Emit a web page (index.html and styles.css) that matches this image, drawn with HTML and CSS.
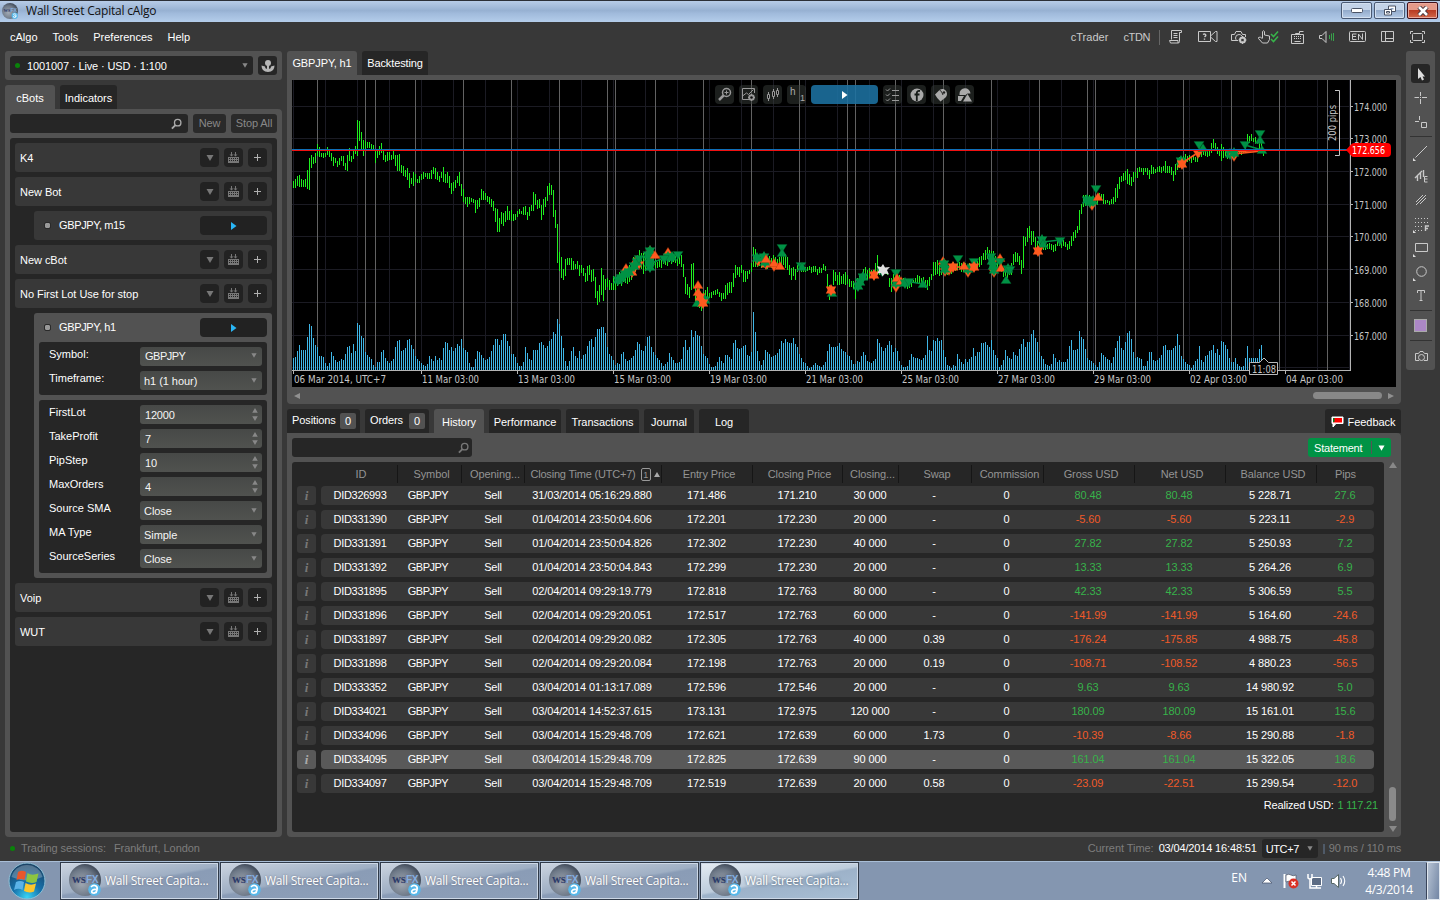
FILE: index.html
```html
<!DOCTYPE html>
<html lang="en">
<head>
<meta charset="utf-8">
<title>Wall Street Capital cAlgo</title>
<link rel="stylesheet" href="styles.css">
</head>
<body>
<svg class="defs" aria-hidden="true">
  <defs>
    <radialGradient id="ball" cx=".4" cy=".6" r=".6"><stop offset="0" stop-color="#a3abb5"/><stop offset=".7" stop-color="#6d7887"/><stop offset="1" stop-color="#46505f"/></radialGradient>
    <radialGradient id="orb" cx=".5" cy=".95" r=".9"><stop offset="0" stop-color="#39d4f5"/><stop offset=".45" stop-color="#1672ac"/><stop offset="1" stop-color="#1b4468"/></radialGradient>
    <symbol id="i-app" viewBox="0 0 32 32"><circle cx="16" cy="16" r="16" fill="url(#ball)"/><text x="3" y="18.500" font-family="Liberation Serif, serif" font-size="9" font-weight="bold" fill="#27386a">WS</text><text x="17" y="18.500" font-family="Liberation Sans, sans-serif" font-size="10" font-weight="bold" fill="#84aee0">FX</text><circle cx="25.500" cy="25.500" r="6.300" fill="#58b8ea"/><path d="M22 23c3-3 7-1 6 2.500l-1 3.500M27 25.500c-4-1-5.500 3-3 3.500s4-2 4-3" fill="none" stroke="#fff" stroke-width="1.700"/></symbol>
    <symbol id="i-search" viewBox="0 0 12 12"><circle cx="7.300" cy="4.500" r="3.500" fill="none" stroke="currentColor" stroke-width="1.500"/><path d="M4.800 7.200 1 11" stroke="currentColor" stroke-width="2"/></symbol>
    <symbol id="i-down" viewBox="0 0 8 6"><path d="M.5 0h7L4 6z" fill="currentColor"/></symbol>
    <symbol id="i-grid" viewBox="0 0 11 11"><path d="M3.500 0v3M7.500 0v3" stroke="currentColor" stroke-width="1"/><path d="M1.500 2.500h4l-2 2zM5.500 2.500h4l-2 2z" fill="currentColor"/><path d="M0 5h11v6H0z" fill="currentColor"/><path d="M1 6.500h9M1 8.500h9" stroke="#222" stroke-dasharray="1 1"/></symbol>
    <symbol id="i-plus" viewBox="0 0 9 9"><path d="M4.500 1v7M1 4.500h7" stroke="#b0b0b0" stroke-width="1"/></symbol>
    <symbol id="i-play" viewBox="0 0 6 8"><path d="M0 0l5.500 4L0 8z" fill="currentColor"/></symbol>
    <symbol id="i-spin" viewBox="0 0 6 14"><path d="M3 0l3 5H0zM3 14l3-5H0z" fill="currentColor"/></symbol>
  </defs>
</svg>

<header class="titlebar">
  <svg class="title-icon"><use href="#i-app"/></svg>
  <span class="title-text">Wall Street Capital cAlgo</span>
  <div class="win-buttons">
    <span class="win-btn"><svg width="12" height="5"><rect x=".5" y=".5" width="11" height="4" rx="1" fill="#fff" stroke="#4a5365"/></svg></span>
    <span class="win-btn"><svg width="12" height="11"><path d="M4.500 1h7v5.500h-7z" fill="#fff" stroke="#4a5365"/><path d="M6.500 3h3v1.500h-3z" fill="#8ea5c4"/><path d="M.5 4.500h7V10h-7z" fill="#fff" stroke="#4a5365"/><path d="M2.500 6.500h3V8h-3z" fill="none" stroke="#4a5365"/></svg></span>
    <span class="win-btn close"><svg width="12" height="10"><path d="M2 1l8 8M10 1L2 9" stroke="#43353c" stroke-width="4.500"/><path d="M2 1l8 8M10 1L2 9" stroke="#fff" stroke-width="2.600"/></svg></span>
  </div>
</header>

<nav class="menubar">
  <div class="menus"><span>cAlgo</span><span>Tools</span><span>Preferences</span><span>Help</span></div>
  <div class="menu-right">
    <span class="lnk">cTrader</span><span class="lnk">cTDN</span><i class="vbar"></i>
    <div class="icons">
      <svg width="14" height="14"><path d="M2.500.5h10v2h-2v8M2.500.5v9M.5 10.500h8.500v2.500H1.500zM10.500 2.500v9q0 1.500-1.500 1.500M4.500 3.500h4M4.500 5.500h4M4.500 7.500h4" class="ln"/></svg>
      <svg width="20" height="12"><path d="M.5.500h12v10H.5zM12.500 5l5-4.500h1.500v10h-1.500l-5-4.500" class="ln"/><path d="M5 3.500q1.500-1 2.500 0t-1 2.500M6.500 7.500v1.200" class="ln b"/></svg>
      <svg width="16" height="14"><path d="M7 10.500H.5v-6h3L5 1.500h5l1.500 3h3V7M4.500 8q0-3.500 3.500-3.500 2 0 3 1.500M4.500 8q0 1.500 1.500 2.500" class="ln"/><circle cx="11.500" cy="10" r="2.500" fill="none" stroke="#c9c9c9" stroke-width="2" /><path d="M11.500 6v8M7.500 10h8" class="ln"/><circle cx="11.500" cy="10" r="1.200" fill="#383838"/></svg>
      <svg width="22" height="14"><path d="M4.500 8V1.500q1-1.500 2 0V5l5 1v3.500L9.500 13h-5L.5 8.500v-1l2-.5 2 2" class="ln"/><path d="M13 4l2.500 2.500L20 1.500M13 9l2.500 2.500L20 6.500" fill="none" stroke="#37b34a" stroke-width="1.600"/></svg>
      <svg width="14" height="13"><path d="M.5 3.500h12v9H.5zM4.500 3.500v-1h4v-2h4M2 5.500h9M2 7.500h9M3.500 10.500h6" class="ln"/><path d="M2 5.500h9M2 7.500h9" stroke="#383838" stroke-dasharray="1 1"/></svg>
      <svg width="17" height="13"><path d="M.5 4.500h2.500l4-4v11l-4-4H.500z" class="ln"/><path d="M10.500 4v4M12.500 2.500v7M14.500 2v8" fill="none" stroke="#37a34a"/></svg>
      <svg width="18" height="12"><rect x=".5" y=".5" width="16" height="10" rx="1" class="ln"/><path d="M3.500 3v5.500M3.500 3h4M3.500 5.500h3.500M3.500 8.500h4M9.500 9V3l4 5.500V2.500" class="ln"/></svg>
      <svg width="14" height="12"><path d="M.5.500h12v10H.5zM4.500.5v10M4.500 7.500h8" class="ln"/></svg>
      <svg width="16" height="12"><rect x="2.500" y="2.500" width="10" height="7" rx="1" class="ln"/><path d="M.5 3V.5H3M12 .5h2.500V3M14.500 9v2.500H12M3 11.500H.5V9" class="ln"/></svg>
    </div>
  </div>
</nav>

<main class="main">
  <aside class="left">
    <div class="account">
      <div class="acc-select"><i class="dot"></i><span>1001007 · Live · USD · 1:100</span><svg class="arr"><use href="#i-down"/></svg></div>
      <div class="acc-user"><svg width="14" height="14"><circle cx="7" cy="4" r="3" fill="#b5b5b5"/><path d="M6 5h2v5H6z" fill="#b5b5b5"/><path d="M.5 6.500 4 7.500q0 2.500 3 2.500t3-2.500l3.500-1Q13.500 13 7 13T.5 6.500z" fill="#b5b5b5"/></svg></div>
    </div>
    <div class="tabs"><span class="tab on">cBots</span><span class="tab ind">Indicators</span></div>
    <div class="panel left-panel">
      <div class="search-row"><div class="search"><svg><use href="#i-search"/></svg></div><span class="btn new">New</span><span class="btn stop">Stop All</span></div>
      <div class="bots">
        <div class="bot"><b>K4</b></div>
        <div class="bot"><b>New Bot</b></div>
        <div class="inst"><i class="led"></i><b>GBPJPY, m15</b><span class="run"><svg><use href="#i-play"/></svg></span></div>
        <div class="bot"><b>New cBot</b></div>
        <div class="bot"><b>No First Lot Use for stop</b></div>
        <div class="inst-open">
          <div class="inst"><i class="led"></i><b>GBPJPY, h1</b><span class="run"><svg><use href="#i-play"/></svg></span></div>
          <div class="params">
            <div class="p"><label>Symbol:</label><span class="f num sym">GBPJPY</span></div>
            <div class="p"><label>Timeframe:</label><span class="f">h1 (1 hour)</span></div>
          </div>
          <div class="params">
            <div class="p"><label>FirstLot</label><span class="f num spin">12000</span></div>
            <div class="p"><label>TakeProfit</label><span class="f num spin">7</span></div>
            <div class="p"><label>PipStep</label><span class="f num spin">10</span></div>
            <div class="p"><label>MaxOrders</label><span class="f num spin">4</span></div>
            <div class="p"><label>Source SMA</label><span class="f">Close</span></div>
            <div class="p"><label>MA Type</label><span class="f">Simple</span></div>
            <div class="p"><label>SourceSeries</label><span class="f">Close</span></div>
          </div>
        </div>
        <div class="bot"><b>Voip</b></div>
        <div class="bot"><b>WUT</b></div>
      </div>
    </div>
  </aside>

  <section class="center">
    <div class="tabs top"><span class="tab on t1">GBPJPY, h1</span><span class="tab t2">Backtesting</span></div>
    <div class="panel chart-panel">
      <div class="chart-box">
        <svg id="chart" width="1104" height="307" viewBox="292 80 1104 307"></svg>
        <div class="chart-tools">
          <span><svg width="20" height="20"><circle cx="11.500" cy="7.500" r="4" fill="none" stroke="#999" stroke-width="1.500"/><path d="M8.500 10.500 4 15" stroke="#999" stroke-width="2.500"/><path d="M11.500 5.500v4M9.500 7.500h4" stroke="#999"/></svg></span>
          <span><svg width="20" height="20"><path d="M10 14.500H3.500v-11h12V8M3.500 11l4-3 2 1.500 5-5" class="g"/><circle cx="12.500" cy="12.500" r="2.500" fill="none" stroke="#999" stroke-width="1.500"/><path d="M12.500 9v7M9 12.500h7M10 10l5 5M15 10l-5 5" class="g"/><circle cx="12.500" cy="12.500" r="1.300" fill="#111"/></svg></span>
          <span><svg width="20" height="20"><path d="M5.500 7v9M10.500 4v10M14.500 3v9" class="g"/><path d="M4.500 9.500h2v4h-2zM9.500 6.500h2v5h-2zM13.500 5.500h2v4h-2z" class="g fillk"/></svg></span>
          <span><svg width="20" height="20"><text x="3" y="10" font-size="10" fill="#aaa">h</text><text x="13" y="16" font-size="9" fill="#aaa">1</text></svg></span>
          <span class="big"><svg width="6" height="8"><use href="#i-play"/></svg></span>
          <span><svg width="20" height="20"><path d="M3 4.500l1.500 1.500L7 3.500M3 9.500l1.500 1.500L7 8.500M3 14.500l1.500 1.500L7 13.500M9 5.500h7M9 10.500h7M9 15.500h7" class="g"/></svg></span>
          <span><svg width="20" height="20"><circle cx="10" cy="10" r="6.500" fill="#aaa"/><path d="M13 6q-3-.7-3.200 2V16M7.500 9.500h5" fill="none" stroke="#151a17" stroke-width="1.800"/></svg></span>
          <span><svg width="20" height="20"><path d="M4 9.500 8.500 5q2-1.500 4-1 3.500 1.500 3.500 5 0 3-3.500 5l-3 2.500Q6 13.500 4 9.500z" fill="#aaa"/><path d="M8.500 5q2.500 1 3.500 5" stroke="#222" fill="none"/><circle cx="13" cy="7.500" r="1.200" fill="#222"/></svg></span>
          <span><svg width="20" height="20"><path d="M4.500 9a5.500 5.500 0 0 1 11-.5h-3L10.500 10H4.500z" fill="#aaa"/><path d="M3 11h6l-3 5H3zM12.500 9l4.500 7.500H8z" fill="#aaa"/></svg></span>
        </div>
      </div>
      <div class="hscroll"><i class="tri-l"></i><i class="thumb"></i><i class="tri-r"></i></div>
    </div>

    <div class="tabs low">
      <span class="tab w73 cnt">Positions<em>0</em></span><span class="tab w64 cnt">Orders<em>0</em></span><span class="tab w50 on">History</span><span class="tab w72">Performance</span><span class="tab w73">Transactions</span><span class="tab w50">Journal</span><span class="tab w50">Log</span>
      <span class="tab fb"><svg width="13" height="12"><path d="M1 1h11v6.500H5L2 11V7.500H1z" fill="#fff" stroke="#fff"/><path d="M2 2h9v4.500H2z" fill="#f00"/><path d="M2 2h1.500v4H2z" fill="#0a7a1a"/></svg>Feedback</span>
    </div>
    <div class="panel hist">
      <div class="hist-top"><div class="search"><svg><use href="#i-search"/></svg></div><div class="statement"><span>Statement</span><i></i><svg><use href="#i-down"/></svg></div></div>
      <div class="hist-body">
        <div class="table">
          <div class="thead cols"><span>ID</span><span>Symbol</span><span>Opening...</span><span class="sorted">Closing Time (UTC+7)<em>1</em><i class="up"></i></span><span>Entry Price</span><span>Closing Price</span><span>Closing...</span><span>Swap</span><span>Commission</span><span>Gross USD</span><span>Net USD</span><span>Balance USD</span><span>Pips</span></div>
          <div id="rows"></div>
          <div class="realized">Realized USD: <span class="pos">1 117.21</span></div>
        </div>
        <div class="vscroll"><i class="tri-u"></i><i class="thumb"></i><i class="tri-d"></i></div>
      </div>
    </div>
  </section>

  <div class="toolbar">
    <i class="grip"></i>
    <span class="sel"><svg width="20" height="20"><path d="M7 4v11l2.500-2 1.500 3.500 2-1-1.500-3H14z" fill="#ddd"/></svg></span>
    <span><svg width="20" height="20"><path d="M9.500 4v4M9.500 11v5M3.500 9.500H8M11 9.500h5M9 9.500h1" class="ln"/></svg></span>
    <span><svg width="20" height="20"><path d="M8.500 4v4M4 9.500h4M10.500 10.500h5v5h-5z" class="ln"/></svg></span>
    <hr>
    <span><svg width="20" height="20"><path d="M4.500 15.500 16 4" class="ln"/><path d="M2 16v3h3z" fill="#ddd"/></svg></span>
    <span><svg width="20" height="20"><path d="M4 12l7-7M6.500 10v5M9.500 7v6M12.500 4v7" class="ln b"/><path d="M16.500 10.500h-3v5.500h3M13.500 13h3" class="ln"/></svg></span>
    <span><svg width="20" height="20"><path d="M5 12l7-7M5 15l10-10M9 14l6-6" class="ln"/></svg></span>
    <span><svg width="20" height="20"><path d="M4 4.500h13M4 8.500h13M4 12.500h8M4 16.500h8" class="ln dash"/><path d="M14.500 17v-5H18M14.500 14.500H17" class="ln b"/><path d="M2 16v3h3z" fill="#ddd"/></svg></span>
    <span><svg width="20" height="20"><path d="M4.500 5.500h12v8h-12z" class="ln"/><path d="M2 16v3h3z" fill="#ddd"/></svg></span>
    <span><svg width="20" height="20"><circle cx="10.500" cy="9.500" r="4.800" class="ln"/><path d="M2 16v3h3z" fill="#ddd"/></svg></span>
    <span><svg width="20" height="20"><path d="M6.500 7V4.500h7V7M10 4.500v10M8.500 14.500h3" class="ln"/></svg></span>
    <hr>
    <span class="sw"><i></i></span>
    <hr>
    <span><svg width="20" height="20"><path d="M8 14.500H4.500v-7h3l1.500-2h3l1.500 2h3v7H13" class="ln"/><circle cx="10.500" cy="11.500" r="3" class="ln"/></svg></span>
  </div>
</main>

<footer class="status">
  <div><i class="dot"></i><span>Trading sessions:</span><span class="cities">Frankfurt, London</span></div>
  <div><span>Current Time:</span><strong>03/04/2014 16:48:51</strong><span class="utc">UTC+7<svg><use href="#i-down"/></svg></span><i class="vb"></i><span>90 ms / 110 ms</span></div>
</footer>

<div class="taskbar">
  <svg class="start" width="38" height="38"><circle cx="19" cy="19" r="18" fill="url(#orb)" stroke="#8fc0d6"/><path d="M3.500 15a16 16 0 0 1 31 0q-15 7-31 0z" fill="#fff" opacity=".25"/><path d="M10 10q4-2.500 8 0l-1.500 8q-4-2-8 0z" fill="#e8572b"/><path d="M19.500 11q4 3 11 .5l-2 8.500q-5 2-10.500-.5z" fill="#8cc540"/><path d="M8 20q4-2 8 0l-1.500 8q-4-2.500-8.500 0z" fill="#5cb3e8"/><path d="M17.500 21q5 3 10.500.5l-2 8q-5 2-10-.5z" fill="#fcc62c"/></svg>
  <div class="tasks">
    <div class="task"><svg><use href="#i-app"/></svg>Wall Street Capita...</div>
    <div class="task"><svg><use href="#i-app"/></svg>Wall Street Capita...</div>
    <div class="task"><svg><use href="#i-app"/></svg>Wall Street Capita...</div>
    <div class="task"><svg><use href="#i-app"/></svg>Wall Street Capita...</div>
    <div class="task active"><svg><use href="#i-app"/></svg>Wall Street Capita...</div>
  </div>
  <div class="tray">
    <span class="lang">EN</span>
    <svg width="90" height="18"><path d="M0 11h10L5 6z" fill="#fff" stroke="#44506a" stroke-width=".7"/><path d="M22.500 2v14" stroke="#fff" stroke-width="2"/><path d="M24 3q3-1.500 5 0t5 0v7q-3 1.500-5 0t-5 0z" fill="#fff" stroke="#4b5465" stroke-width=".7"/><circle cx="31.500" cy="11.500" r="5" fill="#d93025"/><path d="M29.500 9.500l4 4M33.500 9.500l-4 4" stroke="#fff" stroke-width="1.500"/><path d="M49.500 5.500h10v8h-10z" fill="#5d6c84" stroke="#fff"/><path d="M50 16h9M54.500 14v2" stroke="#fff" stroke-width="1.500"/><path d="M46 2v4q2 2 4 0V2M48 7v9h2" fill="none" stroke="#fff" stroke-width="1.500"/><path d="M69.500 6.500H72l4.500-4v13l-4.500-4h-2.500z" fill="#fff" stroke="#566"/><path d="M78.500 6q2 3 0 6M81 4q3.500 5 0 10" fill="none" stroke="#fff" stroke-width="1.100"/></svg>
    <div class="clock">4:48 PM<br>4/3/2014</div>
    <i class="desk"></i>
  </div>
</div>
<script src="app.js"></script>
</body>
</html>
```
FILE: styles.css
```css
* { box-sizing: border-box; }
body { margin: 0; width: 1440px; height: 900px; overflow: hidden; display: flex; flex-direction: column; background: #383838; color: #fff; font: 11px/13px "Liberation Sans", Arial, sans-serif; }
svg { display: block; flex: none; }
i, em { font-style: normal; display: block; flex: none; }
b, strong { font-weight: normal; }
.defs { position: absolute; width: 0; height: 0; }
.ln { fill: none; stroke: #c9c9c9; stroke-width: 1; }
.ln.b { stroke-width: 1.4; }
.dash { stroke-dasharray: 1 2; }
.pos { color: #37b34a; }
.neg { color: #f15a29; }
.dot { width: 5px; height: 5px; border-radius: 50%; background: #0a820a; }

.titlebar { height: 22px; flex: none; border-top: 1px solid #2b2f36; background: linear-gradient(#b7cce7, #97b1d2 45%, #a1bbdc 60%, #b4cdea); display: flex; align-items: center; padding-left: 2px; color: #111; }
.title-icon { width: 16px; height: 16px; margin-top: -2px; }
.title-text { font: 12px/16px "Open Sans", "Noto Sans", sans-serif; margin-left: 8px; letter-spacing: -.2px; margin-top: -1px; }
.win-buttons { margin-left: auto; display: flex; gap: 2px; padding-right: 2px; margin-top: -2px; }
.win-btn { width: 31px; height: 17px; border: 1px solid #4a5a74; border-radius: 2px; box-shadow: inset 0 0 0 1px #d3e0f0; background: linear-gradient(#c3d3e8 45%, #93abcb 50%, #b5cbe6); display: flex; align-items: center; justify-content: center; }
.win-btn.close { border-color: #40101a; box-shadow: inset 0 0 0 1px #e9a99c; background: linear-gradient(#e49a89 45%, #b93c24 50%, #d1684a); }

.menubar { height: 29px; flex: none; display: flex; justify-content: space-between; align-items: center; padding: 1px 7px 0 10px; }
.menus { display: flex; gap: 15px; }
.menu-right { display: flex; align-items: center; }
.lnk { color: #cacaca; margin-right: 15px; letter-spacing: .05px; }
.lnk + .lnk { margin-right: 9px; letter-spacing: -.4px; }
.vbar { width: 1px; height: 15px; background: #666; }
.icons { display: grid; grid-template-columns: 32px 32px 30px 30px 28px 30px 31px 30px 30px; justify-items: center; align-items: center; }

.main { flex: none; height: 786px; display: flex; gap: 5px; padding: 0 5px; align-items: flex-start; }
.left { width: 277px; height: 786px; display: flex; flex-direction: column; flex: none; }
.account { height: 29px; background: #525252; border-radius: 3px; padding: 5px; display: flex; gap: 5px; margin-bottom: 5px; flex: none; }
.acc-select { width: 243px; height: 19px; border-radius: 3px; background: #262626; display: flex; align-items: center; padding: 2px 5px 0; }
.acc-select span { margin-left: 7px; letter-spacing: -.12px; }
.acc-select .dot { margin-top: -2px; }
.acc-select .arr { width: 6px; height: 5px; margin-left: auto; color: #888; margin-top: -3px; }
.acc-user { width: 19px; height: 19px; border-radius: 3px; background: #262626; display: flex; align-items: center; justify-content: center; }
.tabs { display: flex; gap: 5px; height: 24px; flex: none; }
.tab { height: 24px; background: #262626; border-radius: 3px 3px 0 0; display: flex; align-items: center; justify-content: center; padding-top: 2px; width: 50px; white-space: nowrap; letter-spacing: -.04px; }
.top .tab { padding: 0; letter-spacing: -.12px; }
.tab.on { background: #525252; }
.tab.ind { width: 57px; }
.panel { background: #525252; border-radius: 0 4px 4px 4px; padding: 5px; }
.left-panel { flex: 1; display: flex; flex-direction: column; min-height: 0; }
.search-row { display: flex; gap: 5px; height: 19px; margin-bottom: 5px; flex: none; }
.search { width: 178px; height: 19px; background: #262626; border-radius: 3px; display: flex; align-items: center; justify-content: flex-end; padding-right: 6px; color: #aaa; }
.search svg { width: 11px; height: 12px; }
.btn { height: 19px; background: #2a2a2a; border-radius: 3px; color: #888; display: flex; align-items: center; justify-content: center; white-space: nowrap; letter-spacing: -.1px; }
.new { width: 33px; }
.stop { width: 46px; }
.bots { flex: 1; background: #262626; border-radius: 3px; padding: 5px; display: flex; flex-direction: column; gap: 5px; }
.bot { height: 29px; background: #383838; border-radius: 3px; display: flex; align-items: center; gap: 5px; padding: 0 5px; flex: none; }
.bot b { flex: 1; padding-top: 2px; letter-spacing: -.04px; }
.bot .ib { width: 19px; height: 19px; border-radius: 4px; background: #222; display: flex; align-items: center; justify-content: center; color: #777; }
.inst { height: 29px; flex: none; margin-left: 19px; background: #383838; border-radius: 3px; display: flex; align-items: center; padding: 0 5px 0 11px; }
.inst b { flex: 1; margin-left: 9px; letter-spacing: -.35px; }
.led { width: 5px; height: 5px; background: #999; outline: 1px solid #2a2a2a; border-radius: 1px; }
.run { width: 67px; height: 19px; border-radius: 4px; background: #222; color: #29b6f6; display: flex; align-items: center; justify-content: center; }
.run svg { width: 6px; height: 8px; }
.inst-open { margin-left: 19px; background: #525252; border-radius: 3px; padding: 0 5px 5px; display: flex; flex-direction: column; gap: 5px; height: 265px; flex: none; }
.inst-open .inst { margin: 0 -5px -5px; background: none; }
.params { background: #262626; border-radius: 3px; padding: 5px; display: flex; flex-direction: column; gap: 5px; }
.p { display: flex; height: 19px; }
.p label { width: 96px; padding-left: 5px; padding-top: 1px; }
.f { width: 122px; height: 19px; background: linear-gradient(#474947, #50524f); border-radius: 3px; padding: 4px 5px 0 4px; display: flex; justify-content: space-between; color: #f5f5f5; letter-spacing: -.05px; }
.f.num { padding-left: 5px; letter-spacing: -.2px; }
.f.sym { padding-top: 3px; letter-spacing: -.5px; }
.f svg { width: 6px; height: 5px; color: #888; margin-top: 3px; }
.f.spin svg { width: 6px; height: 13px; margin-top: -1px; margin-right: -1px; }

.center { width: 1114px; height: 786px; flex: none; display: flex; flex-direction: column; }
.t1 { width: 70px; } .t2 { width: 66px; }
.chart-panel { height: 329px; margin-bottom: 5px; flex: none; }
.chart-box { position: relative; height: 307px; background: #000; }
.chart-tools { position: absolute; left: 423px; top: 5px; display: flex; gap: 5px; }
.chart-tools span { width: 19px; height: 19px; border-radius: 4px; background: rgba(62, 68, 64, .45); }
.chart-tools .big { width: 67px; background: rgba(29, 114, 162, .88); display: flex; align-items: center; justify-content: center; color: #fff; }
.g { fill: none; stroke: #999; stroke-width: 1; }
.g.fillk { fill: #111; }
.hscroll { display: flex; align-items: center; height: 17px; padding: 0 2px; }
.hscroll i, .vscroll i { border: 0 solid transparent; }
.hscroll .tri-l { border-width: 3.5px 6px 3.5px 0; border-right-color: #909090; }
.hscroll .tri-r { border-width: 3.5px 0 3.5px 6px; border-left-color: #909090; margin-left: 6px; }
.hscroll .thumb { width: 69px; height: 7px; border-radius: 4px; background: #888; margin-left: auto; }

.w50 { width: 50px; } .w64 { width: 64px; } .w72 { width: 72px; } .w73 { width: 73px; }
.tab.cnt { padding: 0 4px 2px 5px; justify-content: space-between; letter-spacing: -.1px; }
.cnt em { width: 16px; height: 16px; background: #525252; border-radius: 2px; text-align: center; line-height: 17px; margin-top: 2px; }
.tab.fb { width: 76px; margin-left: auto; gap: 4px; }
.hist { flex: 1; display: flex; flex-direction: column; }
.hist-top { display: flex; justify-content: space-between; height: 19px; margin-bottom: 5px; padding-right: 5px; }
.hist-top .search { width: 180px; padding-right: 3px; color: #777; }
.statement { width: 83px; background: #009345; border-radius: 3px; display: flex; align-items: center; padding: 2px 6px 0; letter-spacing: -.2px; }
.statement i { width: 1px; height: 13px; background: #555; margin: -2px 6px 0 auto; }
.statement svg { width: 7px; height: 6px; margin-top: -2px; }
.hist-body { display: flex; flex: 1; }
.table { width: 1092px; flex: none; background: #262626; border-radius: 3px; padding: 0 5px; }
.cols { width: 1053px; display: grid; grid-template-columns: 77px 64px 63px 137px 91px 90px 56px 73px 72px 91px 91px 91px 57px; align-items: center; text-align: center; }
.thead { height: 24px; margin-left: 24px; color: #949494; }
.thead span { height: 18px; line-height: 19px; border-right: 1px solid #161616; display: flex; align-items: center; justify-content: center; white-space: nowrap; padding-left: 4px; letter-spacing: -.1px; }
.thead span.sorted { letter-spacing: -.2px; }
.thead span:last-child { border: 0; padding: 0; }
.thead em { width: 10px; height: 13px; border: 1px solid #999; border-radius: 2px; font-size: 9px; line-height: 12px; margin-left: 5px; }
.up { border: solid transparent; border-width: 0 3px 5px; border-bottom-color: #aaa; margin-left: 3px; }
.row { display: flex; gap: 5px; margin-bottom: 5px; }
.info { width: 19px; height: 19px; border-radius: 3px; background: #383838; color: #777; font: italic bold 13px/19px "Liberation Serif", serif; text-align: center; }
.row .cols { height: 19px; border-radius: 4px; background: #383838; letter-spacing: -.12px; }
.row .cols span:first-child { letter-spacing: -.3px; padding-left: 1px; }
.row .cols span:nth-child(2) { padding-right: 4px; letter-spacing: -.5px; }
.row .cols span:nth-child(3) { padding-right: 1px; letter-spacing: -.2px; }
.row .cols span:nth-child(n+4) { padding-right: 3px; }
.row .cols span:nth-child(5), .row .cols span:nth-child(6), .row .cols span:nth-child(7) { padding-right: 2px; }
.row .cols span:nth-child(10), .row .cols span:nth-child(11), .row .cols span:nth-child(12) { padding-right: 3px; }
.row .cols span:last-child { padding-right: 1px; }
.row.hl .cols, .row.hl .info { background: #595959; }
.row.hl .info { color: #aaa; }
.realized { text-align: right; padding: 1px 1px 0 0; letter-spacing: -.18px; }
.realized .pos { margin-left: 1px; }
.vscroll { width: 17px; margin-right: -5px; flex: none; display: flex; flex-direction: column; align-items: center; }
.vscroll .tri-u { border-width: 0 4px 6px; border-bottom-color: #888; }
.vscroll .thumb { width: 7px; height: 34px; border-radius: 4px; background: #8a8a8a; margin-top: auto; }
.vscroll .tri-d { border-width: 6px 4px 0; border-top-color: #888; margin-top: 5px; }

.toolbar { width: 29px; height: 319px; background: #525252; border-radius: 3px; flex: none; display: flex; flex-direction: column; align-items: center; padding-top: 5px; }
.grip { width: 19px; height: 3px; margin-bottom: 5px; background-image: radial-gradient(#222 .6px, transparent .7px); background-size: 2px 2px; }
.toolbar span { width: 19px; height: 19px; margin-bottom: 5px; border-radius: 3px; flex: none; }
.toolbar .sel { background: #262626; }
.toolbar hr { width: 22px; height: 1px; border: 0; background: #333; margin: 0 0 5px; }
.toolbar .sw { display: flex; align-items: center; justify-content: center; }
.sw i { width: 13px; height: 13px; background: #ab87c6; border: 1px solid #aaa; }

.status { flex: none; height: 24px; display: flex; justify-content: space-between; align-items: center; padding: 0 39px 1px 10px; color: #7d7d7d; }
.status > div { display: flex; align-items: center; }
.status .dot { margin-right: 6px; }
.status span { letter-spacing: -.05px; }
.cities { margin-left: 8px; }
.status strong { color: #fff; margin-left: 5px; letter-spacing: -.15px; }
.status .utc { width: 56px; height: 19px; border-radius: 3px; background: #262626; color: #fff; margin-left: 5px; display: flex; align-items: center; justify-content: space-between; padding: 2px 5px 0 4px; letter-spacing: -.4px; }
.utc svg { width: 6px; height: 5px; color: #888; margin-top: -2px; }
.vb { width: 2px; height: 10px; background: #4f5a68; margin: 0 4px 0 5px; }
.vb + span { letter-spacing: -.15px; }

.taskbar { flex: 1; background: #8496b0; border-top: 1px solid #a9bed6; display: flex; font-family: "Open Sans", "Noto Sans", sans-serif; font-size: 12px; }
.start { margin: 0 14px 0 8px; }
.tasks { display: flex; gap: 1px; }
.task { width: 159px; height: 38px; border: 1px solid #e3eaf2; outline: 1px solid #303a49; outline-offset: -1px; box-shadow: inset 0 0 0 1px #cdd8e6; background: linear-gradient(170deg, #cbd4e0, #9fafc4 48%, #8a9cb6 52%, #8d9fb8); display: flex; align-items: center; padding: 0 0 2px 8px; gap: 4px; letter-spacing: -.25px; text-shadow: 0 0 2px #667; }
.task svg { width: 32px; height: 32px; }
.task.active { background: linear-gradient(170deg, #e4ebf2, #bdccdc 48%, #9db2c9 52%, #a8bfd5); text-shadow: 0 0 3px #456; }
.tray { margin-left: auto; display: flex; align-items: center; }
.lang { margin: -7px 15px 0 0; }
.clock { text-align: center; line-height: 17px; width: 68px; letter-spacing: -.3px; margin-left: -7px; margin-right: 3px; }
.tray svg { margin-right: 10px; }
.desk { width: 14px; height: 38px; border: 1px solid #dfe6ee; border-left: 1px solid #39445a; background: linear-gradient(100deg, #b9c5d5, #7386a4); box-shadow: inset 1px 0 #dfe6ee; }
```
FILE: app.js
```js
// Bot list buttons and parameter field arrows
const use = (id, w, h) => `<svg style="width:${w}px;height:${h}px"><use href="#${id}"/></svg>`;
document.querySelectorAll('.bot').forEach(b => {
  b.insertAdjacentHTML('beforeend',
    [['i-down', 8, 6], ['i-grid', 11, 11], ['i-plus', 9, 9]].map(a => `<span class="ib">${use(...a)}</span>`).join(''));
});
document.querySelectorAll('.f').forEach(f => {
  f.insertAdjacentHTML('beforeend', f.classList.contains('spin')
    ? '<svg><use href="#i-spin"/></svg>' : '<svg><use href="#i-down"/></svg>');
});

// Trade history: id, closing time, entry, close, volume, swap, gross, net, balance, pips
const trades = `DID326993|31/03/2014 05:16:29.880|171.486|171.210|30 000|-|80.48|80.48|5 228.71|27.6
DID331390|01/04/2014 23:50:04.606|172.201|172.230|20 000|-|-5.60|-5.60|5 223.11|-2.9
DID331391|01/04/2014 23:50:04.826|172.302|172.230|40 000|-|27.82|27.82|5 250.93|7.2
DID331392|01/04/2014 23:50:04.843|172.299|172.230|20 000|-|13.33|13.33|5 264.26|6.9
DID331895|02/04/2014 09:29:19.779|172.818|172.763|80 000|-|42.33|42.33|5 306.59|5.5
DID331896|02/04/2014 09:29:20.051|172.517|172.763|60 000|-|-141.99|-141.99|5 164.60|-24.6
DID331897|02/04/2014 09:29:20.082|172.305|172.763|40 000|0.39|-176.24|-175.85|4 988.75|-45.8
DID331898|02/04/2014 09:29:20.084|172.198|172.763|20 000|0.19|-108.71|-108.52|4 880.23|-56.5
DID333352|03/04/2014 01:13:17.089|172.596|172.546|20 000|-|9.63|9.63|14 980.92|5.0
DID334021|03/04/2014 14:52:37.615|173.131|172.975|120 000|-|180.09|180.09|15 161.01|15.6
DID334096|03/04/2014 15:29:48.709|172.621|172.639|60 000|1.73|-10.39|-8.66|15 290.88|-1.8
DID334095|03/04/2014 15:29:48.709|172.825|172.639|90 000|-|161.04|161.04|15 322.05|18.6
DID334097|03/04/2014 15:29:48.709|172.519|172.639|20 000|0.58|-23.09|-22.51|15 299.54|-12.0`.split('\n');
const signed = v => `<span class="${v[0] === '-' ? 'neg' : 'pos'}">${v}</span>`;
document.getElementById('rows').innerHTML = trades.map((t, n) => {
  const [id, time, entry, close, vol, swap, gross, net, bal, pips] = t.split('|');
  const plain = [id, 'GBPJPY', 'Sell', time, entry, close, vol, swap, '0'].map(v => `<span>${v}</span>`).join('');
  return `<div class="row${n === 11 ? ' hl' : ''}"><span class="info">i</span><div class="cols">${plain}${signed(gross)}${signed(net)}<span>${bal}</span>${signed(pips)}</div></div>`;
}).join('');

// ---- Chart ----
const out = [];
const rect = (x, y, w, h, c) => out.push(`<rect x="${x}" y="${y}" width="${w}" height="${h}" fill="${c}"/>`);
[106, 138, 171, 204, 236, 269, 302, 335, 367].forEach(y => rect(292, y, 1058, 1, '#1b1b23'));
for (let x = 293; x < 1350; x += 32) rect(x, 80, 1, 290, '#1b1b23');
[317, 365, 375, 415, 463, 511, 559, 607, 615, 655, 703, 751, 799, 847, 855, 895, 943, 991, 1039, 1087, 1095, 1135, 1183, 1231, 1279, 1327]
  .forEach(x => rect(x, 80, 1, 290, '#626262'));

// High/low pairs, one bar per 2px, in pixels below the top of the plot
const dense = '101 108 99 108 96 106 95 107 99 107 100 107 99 107 90 109 78 110 75 88 77 84 73 83 64 76 67 77 73 77 73 78 73 77 67 75 71 77 73 81 77 86 78 83 81 87 78 85 76 81 76 86 83 90 75 91 68 81 76 82 71 79 66 74 40 76 41 61 52 69 60 76 61 69 62 68 62 68 64 69 65 70 71 83 71 78 66 75 63 73 71 80 75 82 72 81 72 80 75 80 71 79 75 86 75 91 74 91 85 93 86 96 90 97 88 100 93 108 98 104 92 106 94 102 99 103 96 103 94 100 92 99 93 97 93 99 93 99 90 99 87 94 88 99 92 100 96 102 92 98 87 102 94 103 92 103 96 108 103 114 102 111 100 108 96 103 92 106 104 116 109 122 117 124 117 127 117 124 118 122 119 123 120 133 120 129 118 127 109 120 111 120 113 120 116 122 117 124 119 127 121 131 128 142 129 152 138 152 132 144 133 146 131 142 126 140 131 140 130 141 134 141 134 140 131 137 129 134 131 134 127 135 126 135 132 140 127 136 125 131 112 131 114 125 120 129 119 128 125 140 119 135 117 127 106 121 103 115 105 115 110 137 130 148 144 183 172 191 177 198 189 200 179 196 178 185 178 185 178 190 181 190 184 189 181 189 185 196 185 193 188 196 193 202 186 201 185 195 190 202 189 201 197 218 211 225 205 222 188 215 195 221 199 210 198 207 200 210 203 210 196 210 200 210 195 206'.split(' ').map(Number);
const bars = [];
for (let i = 0; i < dense.length; i += 2) bars.push([i / 2, dense[i], dense[i + 1]]);
// Sparse points: x, high, low in thirds of a pixel, relative to the panel's x offset
const sparse = [
  [286, '1030 570 620 1045 545 592 1060 525 560 1074 535 597'],
  [640, '22 530 580 52 560 580 76 545 570 100 545 560 124 540 575 130 567 605 136 606 657 142 627 660 148 636 670 154 567 645 160 564 640 166 640 690 172 625 695 184 660 708 190 650 690 196 645 680 202 636 670 208 654 670 214 651 669 220 648 660 232 642 657 238 651 666 244 654 678 250 654 672 256 630 672 262 624 660 268 621 654 274 621 654 280 594 636 286 570 609 292 576 600 298 576 606 304 570 594 310 585 621 316 588 621 322 588 612 328 585 597 334 564 590 340 516 576 346 522 575 352 545 575 420 545 575 430 530 570 442 546 585 448 570 600 454 580 615 460 575 603 466 582 615 472 570 591 478 567 585 490 573 591 502 576 588 520 573 591 538 576 594 556 573 588 562 597 637 568 630 675 574 635 660 580 585 630 586 591 618 592 600 630 598 590 630 604 603 627 610 597 627 616 591 630 622 600 627 628 612 636 634 618 636 640 618 642 646 627 672 652 610 640 664 600 630 676 576 610 688 580 610 700 585 600 706 565 600 712 540 600 718 575 600 730 575 595 742 590 600 748 609 636 754 610 651 766 595 630 790 610 630 808 612 640 820 615 625 832 600 625 844 609 627 856 615 640 862 615 645 868 606 633 874 597 615 880 561 603 886 561 600 892 555 597 898 570 603 904 560 600 912 560 590 930 570 595 950 565 585 970 560 590 984 570 590 1000 560 585 1018 546 576 1030 534 555 1042 516 552 1048 525 552'],
  [990, '4 528 590 22 550 590 34 560 590 40 580 606 58 575 600 64 564 600 70 537 570 76 531 561 82 534 561 88 543 570 94 555 597 100 483 579 106 486 513 112 459 501 118 453 489 124 468 510 130 468 501 136 486 520 148 495 515 160 500 525 172 507 522 184 507 525 190 510 531 196 507 528 202 498 513 214 501 519 226 501 516 238 498 522 244 483 513 250 471 498 256 465 489 262 453 474 268 405 465 274 387 417 280 360 396 292 360 390 304 365 395 316 370 390 328 355 375 334 357 375 340 357 387 346 375 387 352 375 384 358 378 390 364 372 387 370 366 387 376 339 381 382 327 369 388 306 342 394 303 321 400 294 318 406 288 315 412 282 327 418 297 330 424 306 333 430 291 321 436 291 309 442 279 309 448 276 291 454 279 291 460 279 300 466 279 291 472 279 300 478 285 312 484 270 297 490 276 297 496 282 294 502 276 291 508 273 291 514 276 294 520 273 288 526 258 294 532 273 294 544 276 300 550 288 318 556 267 300 562 250 285 574 250 280 580 243 265 586 237 258 592 243 260 616 245 261 622 235 261 628 215 245 640 219 240 652 225 246 658 222 243 664 204 234 670 192 219 676 204 225 682 216 237 688 222 243 694 207 258 700 216 249 706 222 243 718 228 246 730 228 246 742 225 240 760 225 235 766 216 234 772 177 210 778 183 204 784 177 198 790 189 201 796 186 207 802 195 207 808 190 230 814 200 230 820 222 243']
];
sparse.forEach(([off, s]) => {
  const a = s.split(' ').map(Number);
  for (let i = 0; i < a.length; i += 3) bars.push([Math.round((off + a[i] / 3 - 293.3) / 2), (a[i + 1] - 15) / 3, (a[i + 2] - 15) / 3]);
});
for (let k = 0; k < bars.length; k++) {
  const [i0, h0, l0] = bars[k];
  const [i1, h1, l1] = bars[k + 1] || [i0 + 1, h0, l0];
  for (let i = i0; i < i1; i++) {
    const t = (i - i0) / (i1 - i0), j = i === i0 ? 0 : (i * 7 % 5) - 2;
    const hi = Math.round(h0 + (h1 - h0) * t + j), lo = Math.round(l0 + (l1 - l0) * t + j);
    rect(293 + i * 2, 80 + hi, 1, Math.max(2, lo - hi), '#1fee1f');
  }
}

// Tick volume: x, top in thirds of a pixel
const volume = [
  [286, '22 850 28 845 40 810 46 825 58 825 64 785 70 747 76 753 82 789 88 810 94 816 100 843 112 845 118 864 124 873 130 864 136 831 142 843 148 855 154 861 166 852 172 855 178 837 184 816 190 813 196 834 202 807 208 828 214 744 220 750 226 783 232 789 238 831 250 846 256 852 262 870 268 876 274 861 280 861 286 831 292 825 298 849 304 858 310 864 322 852 328 816 334 798 340 795 346 828 358 819 364 795 370 792 376 810 382 822 388 843 394 852 406 864 418 873 424 867 430 843 442 858 448 843 454 855 460 849 466 855 472 819 478 801 484 804 490 825 496 816 502 828 514 807 520 813 526 792 532 819 544 831 550 864 556 876 562 876 568 852 574 828 580 831 592 849 598 855 604 852 610 846 616 828 628 792 634 792 640 810 646 795 652 777 658 777 664 798 670 813 676 837 682 837 688 846 694 864 700 873 706 873 712 861 718 816 724 834 730 852 736 855 742 825 754 825 760 804 766 801 778 819 784 813 790 798 796 792 802 771 808 777 814 732 820 747 826 783 832 819 838 858 844 873 850 858 856 828 862 816 868 843 874 849 880 828 886 852 892 840 898 837 904 813 910 798 916 792 922 816 928 786 934 762 940 762 946 756 952 756 958 774 964 816 970 837 976 843 982 855 988 870 994 864 1000 867 1006 837 1012 831 1018 852 1024 858 1036 849 1042 843 1048 825 1054 801 1060 807'],
  [640, '4 825 10 828 16 813 22 786 28 783 34 816 40 831 52 849 58 855 70 873 76 867 82 861 88 834 94 846 106 864 118 861 124 852 130 816 136 795 142 825 148 816 154 765 160 786 166 768 172 780 178 783 184 813 190 837 202 849 208 867 214 876 226 873 232 861 238 846 244 858 250 864 256 840 262 840 274 852 280 804 286 795 292 819 298 822 310 813 316 810 322 840 328 843 334 831 340 711 346 771 352 828 358 858 364 870 370 855 376 825 388 837 394 846 400 843 412 834 418 822 424 798 430 804 436 792 442 801 454 804 460 789 466 807 472 816 478 837 490 861 496 864 508 879 514 876 526 864 538 873 544 876 556 861 562 828 568 807 574 816 580 816 592 813 598 804 604 822 616 831 622 840 628 843 634 855 640 867 646 867 652 858 658 861 664 843 670 831 676 840 682 858 694 864 706 852 712 792 718 804 724 816 730 828 736 819 742 810 748 798 754 810 760 831 766 819 772 828 778 858 784 870 790 876 802 873 808 855 814 837 820 846 832 849 844 855 856 840 862 783 868 825 874 828 880 795 886 798 892 789 898 798 904 795 910 825 916 846 922 870 928 873 934 879 940 870 946 873 952 837 958 852 970 867 976 852 982 861 988 852 994 846 1000 819 1006 843 1012 831 1018 831 1024 804 1036 801 1042 810 1048 816'],
  [990, '4 795 10 825 16 840 22 849 28 876 34 870 40 855 46 825 52 843 64 852 70 831 76 840 82 843 88 822 94 807 100 792 106 816 112 801 118 801 124 777 130 765 136 789 142 801 148 831 160 852 166 867 178 873 184 867 190 837 202 861 208 855 214 861 226 861 232 852 238 813 244 795 250 825 262 822 268 768 274 786 280 792 286 822 292 849 304 858 316 870 322 876 328 861 334 834 346 846 358 855 364 864 370 846 376 819 382 798 388 783 394 819 400 825 406 801 412 774 418 768 424 792 430 831 436 849 442 846 454 852 460 873 466 873 472 858 478 831 484 831 490 855 496 858 508 849 514 840 520 813 526 810 532 825 544 825 550 819 556 813 562 777 568 810 574 843 580 852 586 861 598 870 604 879 616 858 622 852 628 813 634 855 640 861 646 843 652 840 658 828 664 825 670 810 676 834 682 822 688 840 694 798 700 801 706 810 712 822 718 849 724 861 730 861 736 849 742 867 754 876 760 873 766 849 772 813 778 849 802 849 808 822 814 810 820 870']
];
const vol = [];
volume.forEach(([off, s]) => {
  const a = s.split(' ').map(Number);
  for (let i = 0; i < a.length; i += 2) vol.push([Math.round((off + a[i] / 3 - 293.3) / 2), 75 + a[i + 1] / 3]);
});
for (let k = 0; k < vol.length; k++) {
  const [i0, y0] = vol[k], [i1, y1] = vol[k + 1] || [i0 + 1, y0];
  for (let i = i0; i < i1; i++) {
    const y = Math.round(y0 + (y1 - y0) * (i - i0) / (i1 - i0));
    rect(293 + i * 2, y, 1, 370 - y, '#3fb6e6');
  }
}

// Trade links and markers: x y colour shape (v down, u up, s both)
const G = '#009245', O = '#ff5a1f';
[[1042, 242, 1060, 240, G], [905, 281, 923, 284, G], [1245, 145, 1262, 150, G], [1182, 163, 1199, 152, O], [1234, 154, 1262, 151, O], [1234, 152, 1262, 150, O], [650, 254, 660, 257, O], [650, 264, 668, 256, G], [955, 267, 968, 267, O]]
  .forEach(([a, b, c, d, k]) => out.push(`<path d="M${a} ${b}L${c} ${d}" stroke="${k}" stroke-width="1.500"/>`));
const marks = `626 268 O u|636 260 O u|632 272 O s|639 265 O v|618 280 G s|621 278 G s|625 274 G s|629 272 G s|634 266 G s|637 262 G s|639 259 G v|650 250 O u|650 251 G s|648 255 G s|650 259 G s|649 263 G s|650 267 G s|655 255 O u|668 252 O u|668 257 G s|672 257 G s|664 259 G v|678 255 G v|697 303 G u|705 300 G s|698 285 O u|698 292 O u|700 297 O s|703 303 O s|758 262 O v|757 258 G s|764 257 G s|766 264 O s|765 262 G s|766 259 O u|774 267 O v|774 263 O u|780 266 O u|782 248 G v|782 253 G u|801 266 G v|802 267 G u|832 293 G u|831 290 O s|858 286 G s|860 282 G s|863 277 G s|874 275 O s|882 272 G v|896 288 O v|896 273 G v|896 283 G s|897 278 O u|901 281 O u|905 283 G s|909 282 G v|923 284 G u|943 261 O u|945 272 O v|949 271 O v|944 264 G s|945 269 G s|953 267 O s|958 259 G v|968 273 O v|968 269 G s|964 266 O u|974 262 G v|974 267 O s|994 273 O v|991 257 G v|992 261 G s|993 266 G s|994 270 G s|1000 258 O u|1000 262 G v|1001 268 O u|1008 269 G s|1010 270 G v|1006 280 G u|1042 240 G s|1043 244 G u|1038 251 O s|1060 241 G v|1092 206 O v|1087 200 G s|1090 202 G s|1093 201 G s|1096 189 G v|1098 197 O u|1181 161 G s|1182 164 O s|1198 154 O v|1199 145 G v|1203 148 G u|1230 154 G s|1234 157 O v|1234 153 G s|1245 145 G v|1262 150 G u|1260 134 G v|1260 140 G u`.split('|');
marks.forEach(m => {
  const [x, y, k, s] = m.split(' ');
  const c = k === 'G' ? G : O, st = k === 'G' ? '#00602d' : '#b33c10';
  const up = s === 's' ? 'M0-6L5.200 3.500H-5.200z' : 'M0-4.500L5 3.500H-5z';
  const dn = s === 's' ? 'M0 6L-5.200-3.500H5.200z' : 'M0 4.500L-5-3.500H5z';
  const shapes = s === 'u' ? [up] : s === 'v' ? [dn] : [up, dn];
  shapes.forEach(d => out.push(`<path transform="translate(${x} ${y})" d="${d}" fill="${c}" ${s === 's' ? '' : `stroke="${st}" stroke-width=".4"`}/>`));
});
out.push('<path d="M883 264l2 3.500 5-.5-3 3 2 4.500-4-1-2.500 3-1.500-3.500-4 .5 2-3.500-2-4 4 1z" fill="#e0e0e0"/>');

rect(292, 149, 1058, 1, '#0f6fb8');
rect(292, 150, 1058, 1, '#f01010');
rect(1350, 80, 1, 291, '#b4b4b4');
rect(292, 370, 1059, 1, '#b4b4b4');

const label = (x, y, t, w) => out.push(`<text x="${x}" y="${y}" textLength="${w}" lengthAdjust="spacingAndGlyphs" class="ax">${t}</text>`);
[106, 138, 171, 204, 236, 269, 302, 335].forEach((y, i) => {
  rect(1350, y, 3, 1, '#b4b4b4');
  label(1354, y + 5, `${174 - i}.000`, 33);
});
['06 Mar 2014, UTC+7', '11 Mar 03:00', '13 Mar 03:00', '15 Mar 03:00', '19 Mar 03:00', '21 Mar 03:00', '25 Mar 03:00', '27 Mar 03:00', '29 Mar 03:00', '02 Apr 03:00', '04 Apr 03:00']
  .forEach((t, i) => {
    const x = i ? 325 + i * 96 : 293;
    rect(x, 370, 1, 4, '#b4b4b4');
    label(x + 1, 383, t, i ? 57 : 92);
  });
out.push('<path d="M1335 90.500h4.500v65h-4.500" fill="none" stroke="#c4c4c4"/>');
out.push('<text transform="translate(1336 141) rotate(-90)" textLength="36" lengthAdjust="spacingAndGlyphs" class="ax">200 pips</text>');
out.push('<path d="M1346 150l5-5.500q1-1.500 3-1.500h33q4 0 4 4v6q0 4-4 4h-33q-2 0-3-1.500z" fill="#f00"/>');
out.push('<text x="1352" y="154" textLength="33" lengthAdjust="spacingAndGlyphs" class="ax w">172.656</text>');
out.push('<path d="M1250.500 362.500h9l4.500-4.500 4.500 4.500h9v12h-28v-12z" fill="#000" stroke="#b9b9b9"/>');
label(1252, 373, '11:08', 24);
const svg = document.getElementById('chart');
svg.innerHTML = `<style>.ax{font:10px "DejaVu Sans Condensed","DejaVu Sans",sans-serif;fill:#c6c6c6}.w{fill:#fff}</style>` + out.join('');
```
